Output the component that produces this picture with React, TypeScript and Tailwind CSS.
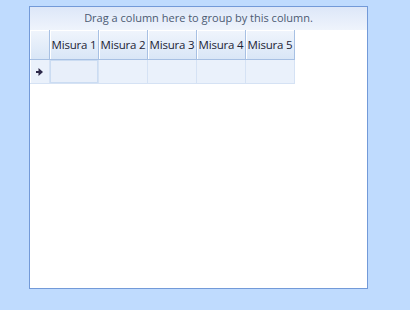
import React from 'react';

const columns = ['Misura 1', 'Misura 2', 'Misura 3', 'Misura 4', 'Misura 5'];

const App: React.FC = () => {
  return (
    <div className="w-[410px] h-[310px] bg-[#bfdbfe] pt-[6px] pl-[29px]" style={{ fontFamily: '"Open Sans", "Noto Sans", sans-serif' }}>
      <div className="w-[339px] h-[283px] border border-[#739ad8] bg-white flex flex-col">
        {/* group panel */}
        <div className="h-[23px] flex items-center justify-center bg-gradient-to-b from-[#dde7f8] to-[#eff4fc] text-[11px] text-[#4c5a72]">
          Drag a column here to group by this column.
        </div>

        {/* header */}
        <div className="flex h-[30px]">
          <div className="w-[20px] border-r border-b border-[#a7c0e3] bg-gradient-to-b from-[#f0f5fc] to-[#d9e6f7] shadow-[inset_1px_1px_0_#ffffff]" />
          {columns.map((c) => (
            <div
              key={c}
              className="w-[49px] flex items-center justify-center border-r border-b border-[#a7c0e3] bg-gradient-to-b from-[#f0f5fc] to-[#d9e6f7] shadow-[inset_1px_1px_0_#ffffff] text-[11.5px] text-[#1c2436] tracking-[-0.2px]"
            >
              {c}
            </div>
          ))}
        </div>

        {/* new row */}
        <div className="flex h-[24px]">
          <div className="w-[20px] flex items-center justify-center border-r border-b border-[#d5e2f4] bg-[#eaf1fb] shadow-[inset_1px_0_0_#ffffff]">
            <svg width="7" height="8" viewBox="0 0 7 8">
              <path d="M2.5 0 L7 4 L2.5 8 Z" fill="#2e2a4a" />
              <rect x="0" y="3" width="3" height="2" fill="#2e2a4a" />
            </svg>
          </div>
          {columns.map((c, i) => (
            <div
              key={c}
              className={
                i === 0
                  ? 'w-[49px] border-r border-b border-[#d5e2f4] bg-[#e8effa] shadow-[inset_0_0_0_1px_#cbdcf2]'
                  : 'w-[49px] border-r border-b border-[#d5e2f4] bg-[#eaf1fb]'
              }
            />
          ))}
        </div>
      </div>
    </div>
  );
};

export default App;
